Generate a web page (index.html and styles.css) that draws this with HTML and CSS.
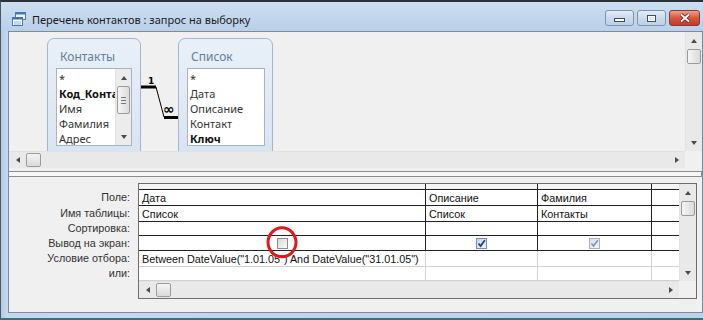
FILE: index.html
```html
<!DOCTYPE html>
<html lang="ru">
<head>
    <meta charset="UTF-8">
    <title>Перечень контактов : запрос на выборку</title>
    <link rel="stylesheet" href="styles.css">
</head>
<body>
    <div class="window">
        <div class="titlebar">
            <svg class="app-icon" width="16" height="16" viewBox="0 0 16 16">
                <rect x="4.5" y="1.5" width="10" height="7" fill="#eef5fd" stroke="#4b79b8"/>
                <rect x="4.5" y="1.5" width="10" height="2" fill="#4b79b8"/>
                <rect x="1.5" y="6.5" width="10" height="8" fill="#ffffff" stroke="#4b79b8"/>
                <rect x="1.5" y="6.5" width="10" height="2" fill="#3f6fb0"/>
                <path d="M3 11 H10 M3 13 H10" stroke="#8fb0da"/>
            </svg>
            <span class="title">Перечень контактов : запрос на выборку</span>
            <div class="caption-buttons">
                <div class="cbtn"><span class="glyph-min"></span></div>
                <div class="cbtn"><span class="glyph-max"></span></div>
                <div class="cbtn close">
                    <svg width="12" height="10" viewBox="0 0 12 10">
                        <path d="M2 1.5 L10 8.5 M10 1.5 L2 8.5" stroke="#5a1e14" stroke-width="3.6"/>
                        <path d="M2 1.5 L10 8.5 M10 1.5 L2 8.5" stroke="#ffffff" stroke-width="2"/>
                    </svg>
                </div>
            </div>
        </div>

        <div class="client">
            <!-- table diagram -->
            <div class="design">
                <div class="canvas">
                    <div class="table-box contacts">
                        <div class="table-title">Контакты</div>
                        <div class="field-list">
                            <div class="fields">
                                <div>*</div>
                                <div class="key">Код_Контакта</div>
                                <div>Имя</div>
                                <div>Фамилия</div>
                                <div>Адрес</div>
                            </div>
                            <div class="sb-v mini">
                                <div class="arrow"><span class="tri-up"></span></div>
                                <div class="thumb tall"><span class="grip"></span></div>
                                <div class="track"></div>
                                <div class="arrow"><span class="tri-down"></span></div>
                            </div>
                        </div>
                    </div>
                    <div class="table-box spisok">
                        <div class="table-title">Список</div>
                        <div class="field-list">
                            <div class="fields">
                                <div>*</div>
                                <div>Дата</div>
                                <div>Описание</div>
                                <div>Контакт</div>
                                <div class="key">Ключ</div>
                            </div>
                        </div>
                    </div>
                    <svg class="relation" width="675" height="119" viewBox="0 0 675 119">
                        <path d="M132 55 H147" stroke="#000" stroke-width="3"/>
                        <path d="M147 55 L155 85" stroke="#000" stroke-width="1"/>
                        <path d="M155 85.5 H169" stroke="#000" stroke-width="3"/>
                        <text x="139" y="52" class="rel-one">1</text>
                        <text x="154" y="82" class="rel-many">∞</text>
                    </svg>
                </div>
                <div class="sb-v">
                    <div class="arrow"><span class="tri-up"></span></div>
                    <div class="thumb"></div>
                    <div class="track"></div>
                    <div class="arrow"><span class="tri-down"></span></div>
                </div>
                <div class="sb-h">
                    <div class="arrow"><span class="tri-left"></span></div>
                    <div class="thumb"></div>
                    <div class="track"></div>
                    <div class="arrow"><span class="tri-right"></span></div>
                </div>
                <div class="sb-corner"></div>
            </div>

            <div class="splitter"></div>

            <!-- query grid -->
            <div class="grid-pane">
                <div class="row-labels">
                    <div></div>
                    <div>Поле:</div>
                    <div>Имя таблицы:</div>
                    <div>Сортировка:</div>
                    <div>Вывод на экран:</div>
                    <div>Условие отбора:</div>
                    <div>или:</div>
                </div>
                <div class="qbe">
                    <div class="sb-v qbe-vscroll">
                        <div class="arrow"><span class="tri-up"></span></div>
                        <div class="thumb"></div>
                        <div class="track"></div>
                        <div class="arrow"><span class="tri-down"></span></div>
                    </div>

                    <div class="c head"></div><div class="c head"></div><div class="c head"></div><div class="c head last"></div>

                    <div class="c">Дата</div><div class="c">Описание</div><div class="c">Фамилия</div><div class="c last"></div>

                    <div class="c">Список</div><div class="c">Список</div><div class="c">Контакты</div><div class="c last"></div>

                    <div class="c"></div><div class="c"></div><div class="c"></div><div class="c last"></div>

                    <div class="c center marked">
                        <span class="chk"></span>
                        <span class="ring"></span>
                    </div>
                    <div class="c center">
                        <span class="chk on">
                            <svg width="9" height="9" viewBox="0 0 9 9"><path d="M1.5 4.5 L3.6 7 L7.8 1.2" fill="none" stroke="#1f3f93" stroke-width="1.8"/></svg>
                        </span>
                    </div>
                    <div class="c center">
                        <span class="chk on pale">
                            <svg width="9" height="9" viewBox="0 0 9 9"><path d="M1.5 4.5 L3.6 7 L7.8 1.2" fill="none" stroke="#7d8fbf" stroke-width="1.6"/></svg>
                        </span>
                    </div>
                    <div class="c last"></div>

                    <div class="c light">Between DateValue("1.01.05") And DateValue("31.01.05")</div><div class="c light"></div><div class="c light"></div><div class="c light last"></div>

                    <div class="c light"></div><div class="c light"></div><div class="c light"></div><div class="c light last"></div>

                    <div class="sb-h qbe-hscroll">
                        <div class="arrow"><span class="tri-left"></span></div>
                        <div class="thumb"></div>
                        <div class="track"></div>
                        <div class="arrow"><span class="tri-right"></span></div>
                    </div>
                    <div class="sb-corner qbe-corner"></div>
                </div>
            </div>
        </div>
    </div>
</body>
</html>
```

FILE: styles.css
```css
body {
    margin: 0;
    width: 703px;
    height: 320px;
    overflow: hidden;
    font-family: "Liberation Sans", Arial, sans-serif;
    background: #3d6f78;
}
.window {
    height: 318px;
    box-sizing: border-box;
    border-top: 2px solid #2e3236;
    border-left: 1px solid #4a5866;
    background: linear-gradient(90deg, #b3cbe5, #c4d8ee 6px, #bcd2ea);
    display: flex;
    flex-direction: column;
}
.titlebar {
    height: 29px;
    box-sizing: border-box;
    padding: 5px 0 0 10px;
    display: flex;
    align-items: center;
    background: linear-gradient(#cddef1, #b9d0e9);
}
.app-icon {
    flex: none;
    margin-right: 5px;
}
.title {
    font-family: "Noto Sans", sans-serif;
    font-size: 11px;
    color: #1b1b1b;
}
.caption-buttons {
    margin-left: auto;
    margin-right: 3px;
    align-self: flex-start;
    margin-top: 3px;
    display: flex;
    gap: 3px;
}
.cbtn {
    width: 29px;
    height: 16px;
    box-sizing: border-box;
    border: 1px solid #7e93ad;
    border-radius: 3px;
    background: linear-gradient(#e4edf7, #cbdaec 50%, #bed1e8);
    display: flex;
    align-items: center;
    justify-content: center;
}
.cbtn.close {
    width: 31px;
    border-color: #8a3b2e;
    background: linear-gradient(#eda08e, #d9553c 50%, #c63a24);
}
.glyph-min {
    width: 9px;
    height: 2px;
    margin-top: 4px;
    background: #fff;
    border: 1px solid #3b4e67;
}
.glyph-max {
    width: 7px;
    height: 5px;
    background: #dfe8f3;
    border: 1px solid #3b4e67;
    box-shadow: inset 0 0 0 1px #fff;
}

.client {
    margin: 0 0 0 7px;
    height: 282px;
    box-sizing: border-box;
    border: 1px solid #7f8b97;
    background: #f0f0f0;
    display: flex;
    flex-direction: column;
}

/* upper part: tables and relations */
.design {
    display: grid;
    grid-template-columns: 1fr 17px;
    grid-template-rows: 119px 17px;
}
.canvas {
    position: relative;
    overflow: hidden;
    background: #f0f0f0;
}
.table-box {
    position: absolute;
    top: 6px;
    height: 130px;
    box-sizing: border-box;
    border: 1px solid #a4b7cd;
    border-radius: 7px 7px 0 0;
    background: linear-gradient(#e9f0f8, #d6e3f2);
}
.contacts {
    left: 38px;
    width: 94px;
}
.spisok {
    left: 169px;
    width: 95px;
}
.table-title {
    height: 29px;
    box-sizing: border-box;
    padding: 10px 0 0 12px;
    font-family: "Noto Sans", sans-serif;
    font-size: 12px;
    line-height: 16px;
    color: #697d96;
}
.field-list {
    margin-left: 8px;
    width: 76px;
    height: 78px;
    box-sizing: border-box;
    border: 1px solid #a9b4c0;
    background: #fff;
    display: flex;
    overflow: hidden;
}
.spisok .field-list {
    width: 78px;
}
.fields {
    flex: 1;
    min-width: 0;
    padding: 2px 0 0 2px;
    font-family: "Noto Sans", sans-serif;
    font-size: 11px;
    line-height: 15px;
    color: #333;
    white-space: nowrap;
    overflow: hidden;
}
.fields .key {
    font-weight: bold;
    color: #111;
}
.relation {
    position: absolute;
    left: 0;
    top: 0;
}
.rel-one {
    font-family: "DejaVu Sans", sans-serif;
    font-size: 9px;
    font-weight: bold;
}
.rel-many {
    font-family: "DejaVu Sans", sans-serif;
    font-size: 14px;
    font-weight: bold;
}

/* scrollbars */
.sb-v, .sb-h {
    display: flex;
    background: #e9e9e9;
}
.sb-v {
    flex-direction: column;
    border-left: 1px solid #e2e2e2;
}
.sb-h {
    border-top: 1px solid #e2e2e2;
}
.sb-v .arrow {
    height: 17px;
    flex: none;
}
.sb-h .arrow {
    width: 17px;
    flex: none;
}
.arrow {
    display: flex;
    align-items: center;
    justify-content: center;
}
.track {
    flex: 1;
}
.thumb {
    box-sizing: border-box;
    border: 1px solid #9b9b9b;
    border-radius: 2px;
}
.sb-v .thumb {
    height: 15px;
    margin: 0 1px;
    background: linear-gradient(90deg, #f5f5f5, #dadada);
}
.sb-h .thumb {
    width: 15px;
    margin: 1px 0;
    background: linear-gradient(#f5f5f5, #dadada);
}
.sb-v.mini {
    width: 15px;
    flex: none;
    background: #ececec;
}
.sb-v.mini .thumb.tall {
    height: 28px;
    display: flex;
    align-items: center;
    justify-content: center;
}
.grip {
    width: 5px;
    height: 5px;
    border-top: 1px solid #777;
    border-bottom: 1px solid #777;
    background: linear-gradient(transparent 2px, #777 2px, #777 3px, transparent 3px);
}
.tri-up, .tri-down, .tri-left, .tri-right {
    width: 0;
    height: 0;
}
.tri-up {
    border-left: 3px solid transparent;
    border-right: 3px solid transparent;
    border-bottom: 4px solid #4a4a4a;
}
.tri-down {
    border-left: 3px solid transparent;
    border-right: 3px solid transparent;
    border-top: 4px solid #4a4a4a;
}
.tri-left {
    border-top: 3px solid transparent;
    border-bottom: 3px solid transparent;
    border-right: 4px solid #4a4a4a;
}
.tri-right {
    border-top: 3px solid transparent;
    border-bottom: 3px solid transparent;
    border-left: 4px solid #4a4a4a;
}
.sb-corner {
    background: #f0f0f0;
}

.splitter {
    margin-top: 3px;
    height: 4px;
    border-top: 1px solid #8d8d8d;
    border-bottom: 1px solid #8d8d8d;
    border-right: 1px solid #8d8d8d;
    background: #f7f7f7;
}

/* lower part: query grid */
.grid-pane {
    flex: 1;
    display: flex;
    align-items: flex-start;
    padding-top: 6px;
    background: #f0f0f0;
    font-size: 10.8px;
}
.row-labels {
    width: 129px;
    box-sizing: border-box;
    padding-right: 8px;
    display: grid;
    grid-template-rows: 6px 16px 16px 14px 15px 16px 14px;
    text-align: right;
    color: #333;
}
.row-labels div {
    display: flex;
    align-items: center;
    justify-content: flex-end;
    white-space: nowrap;
}
.qbe {
    display: grid;
    grid-template-columns: 287px 112px 114px 27px 17px;
    grid-template-rows: 6px 16px 16px 14px 15px 16px 14px 17px;
    border: 1px solid #6e6e6e;
    background: #fff;
}
.qbe-vscroll {
    grid-column: 5;
    grid-row: 1 / 8;
}
.qbe-hscroll {
    grid-column: 1 / 5;
    grid-row: 8;
}
.qbe-corner {
    grid-column: 5;
    grid-row: 8;
}
.c {
    box-sizing: border-box;
    border-right: 1px solid #202020;
    border-bottom: 1px solid #202020;
    padding-left: 3px;
    display: flex;
    align-items: center;
    white-space: nowrap;
    overflow: hidden;
    color: #111;
}
.c.last {
    border-right: none;
}
.c.head {
    background: #f4f4f4;
}
.c.light {
    border-color: #d2d2d2;
}
.c.center {
    justify-content: center;
    padding-left: 0;
}
.c.marked {
    position: relative;
    overflow: visible;
}
.chk {
    width: 11px;
    height: 11px;
    box-sizing: border-box;
    border: 1px solid #8c8c8c;
    background: linear-gradient(135deg, #d9d9d9, #fafafa);
    display: flex;
    align-items: center;
    justify-content: center;
}
.chk.on {
    border-color: #7a8ca6;
    background: linear-gradient(135deg, #c6d7ed, #eef4fb);
}
.chk.pale {
    border-color: #a5b0c0;
    background: linear-gradient(135deg, #d8e1ee, #f1f5fa);
}
.ring {
    position: absolute;
    left: 50%;
    top: 50%;
    width: 31px;
    height: 32px;
    box-sizing: border-box;
    border: 3px solid #e3161c;
    border-radius: 50%;
    transform: translate(-50%, -52%);
    z-index: 1;
}
```
